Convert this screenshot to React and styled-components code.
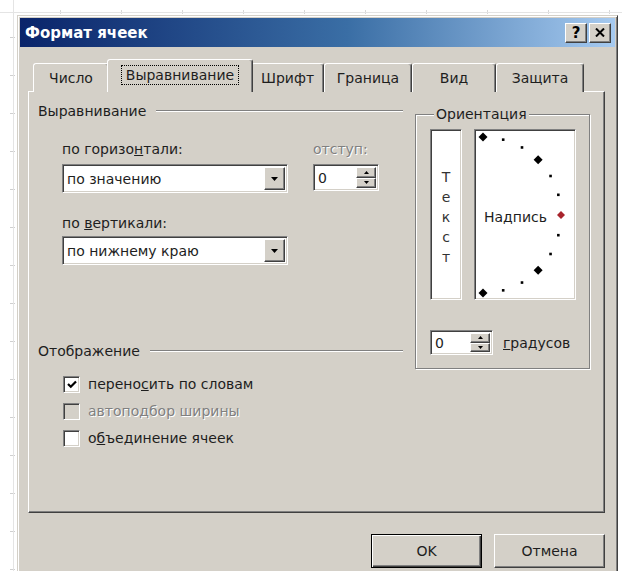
import React from 'react'
import styled, { createGlobalStyle, css } from 'styled-components'

const face = '#d4d0c8'
const shade = '#808080'
const dark = '#404040'

const GlobalStyles = createGlobalStyle`
  html, body {
    margin: 0;
    padding: 0;
  }
  body {
    width: 622px;
    height: 571px;
    overflow: hidden;
    background: #fff;
    font-family: "DejaVu Sans", "Liberation Sans", sans-serif;
    font-size: 14px;
    color: #1e1e1e;
  }
`

const raised = css`
  border-style: solid;
  border-width: 1px;
  border-color: #fff ${dark} ${dark} #fff;
  box-shadow: inset -1px -1px 0 ${shade}, inset 1px 1px 0 ${face};
`

const sunken = css`
  border-style: solid;
  border-width: 1px;
  border-color: ${shade} #fff #fff ${shade};
  box-shadow: inset 1px 1px 0 ${dark}, inset -1px -1px 0 ${face};
`

// spreadsheet grid peeking out behind the dialog
const Sheet = styled.div`
  width: 622px;
  height: 571px;
  overflow: hidden;
  box-sizing: border-box;
  padding: 15px 0 0 17px;
  background-color: #fff;
  background-image: linear-gradient(#e4e4e4, #e4e4e4),
    linear-gradient(#e4e4e4, #e4e4e4),
    repeating-linear-gradient(to bottom, transparent 0 37px, #cfcfcf 37px 38px),
    repeating-linear-gradient(to right, transparent 0 60px, #d8d8d8 60px 61px);
  background-size: 1px 100%, 100% 1px, 5px 100%, 100% 4px;
  background-position: 13px 0, 0 12px, 10px 0, 0 10px;
  background-repeat: no-repeat;
`

const Dialog = styled.div`
  width: 601px;
  height: 590px;
  flex: none;
  box-sizing: border-box;
  background: ${face};
  border: 1px solid;
  border-color: ${face} ${dark} ${dark} ${face};
  box-shadow: inset 1px 1px 0 #fff, inset -1px -1px 0 ${shade};
  padding: 2px;
  display: flex;
  flex-direction: column;
`

const TitleBar = styled.div`
  height: 29px;
  display: flex;
  align-items: center;
  padding: 0 4px 0 5px;
  background: linear-gradient(to right, #0a246a 0%, #3a6ea5 55%, #a6caf0 100%);
`

const Title = styled.div`
  flex: 1;
  color: #fff;
  font-weight: bold;
  font-size: 15px;
`

const CaptionButton = styled.div`
  width: 22px;
  height: 20px;
  box-sizing: border-box;
  ${raised};
  background: ${face};
  display: flex;
  align-items: center;
  justify-content: center;
  font-weight: bold;
  font-size: 15px;
  color: #000;
  margin-left: ${p => p.$gap || 0}px;
`

const Body = styled.div`
  padding: 12px 10px 0 8px;
  display: flex;
  flex-direction: column;
`

const TabRow = styled.div`
  display: flex;
  align-items: flex-end;
  padding-left: 5px;
  margin-bottom: -1px;
  position: relative;
  z-index: 1;
`

const Tab = styled.div`
  width: ${p => p.$w}px;
  height: ${p => (p.$active ? 33 : 29)}px;
  box-sizing: border-box;
  margin: 0 ${p => (p.$active ? -2 : 0)}px;
  background: ${face};
  border-style: solid;
  border-width: 1px 1px 0 1px;
  border-color: #fff ${dark} transparent #fff;
  box-shadow: inset -1px 0 0 ${shade};
  border-radius: 3px 3px 0 0;
  display: flex;
  align-items: center;
  justify-content: center;
  padding-bottom: ${p => (p.$active ? 2 : 0)}px;
  position: relative;
  z-index: ${p => (p.$active ? 2 : 1)};
`

const Focus = styled.span`
  outline: 1px dotted #000;
  outline-offset: 1px;
  padding: 0 3px;
`

const Panel = styled.div`
  height: 422px;
  box-sizing: border-box;
  ${raised};
  background: ${face};
  padding: 10px 0 0 9px;
  display: grid;
  grid-template-columns: 365px 175px;
  column-gap: 12px;
  align-items: start;
`

const Column = styled.div`
  display: flex;
  flex-direction: column;
`

const GroupHeader = styled.div`
  display: flex;
  align-items: center;
  height: 18px;
  margin-top: ${p => p.$top || 0}px;

  &::after {
    content: '';
    flex: 1;
    margin-left: 10px;
    border-top: 1px solid ${shade};
    border-bottom: 1px solid #fff;
  }
`

const Indent = styled.div`
  padding-left: 24px;
  display: flex;
  flex-direction: column;
`

const FieldRow = styled.div`
  display: flex;
  gap: 25px;
  margin-top: 20px;
`

const Field = styled.div`
  display: flex;
  flex-direction: column;
  margin-top: ${p => p.$top || 0}px;
`

const Label = styled.div`
  height: 18px;
  line-height: 18px;
  margin-bottom: ${p => p.$gap ?? 6}px;
  color: ${p => (p.$disabled ? shade : 'inherit')};
  text-shadow: ${p => (p.$disabled ? '1px 1px 0 #fff' : 'none')};
`

const Combo = styled.div`
  width: 226px;
  height: 29px;
  box-sizing: border-box;
  ${sunken};
  background: #fff;
  display: flex;
  padding: 2px;
`

const ComboText = styled.div`
  flex: 1;
  display: flex;
  align-items: center;
  padding-left: 2px;
`

const ArrowButton = styled.div`
  width: ${p => p.$w || 21}px;
  box-sizing: border-box;
  ${raised};
  background: ${face};
  display: flex;
  align-items: center;
  justify-content: center;
  flex: ${p => (p.$fill ? 1 : 'none')};
`

const Spinner = styled.div`
  width: ${p => p.$w}px;
  height: ${p => p.$h}px;
  box-sizing: border-box;
  ${sunken};
  background: #fff;
  display: flex;
  padding: 2px;
`

const SpinValue = styled.div`
  flex: 1;
  display: flex;
  align-items: center;
  padding-left: 2px;
`

const SpinButtons = styled.div`
  width: 20px;
  display: flex;
  flex-direction: column;
`

const Checks = styled.div`
  display: flex;
  flex-direction: column;
  gap: 7px;
  margin-top: 14px;
  padding-left: 25px;
`

const CheckRow = styled.div`
  display: flex;
  align-items: center;
  height: 20px;
  gap: 8px;
  color: ${p => (p.$disabled ? shade : 'inherit')};
  text-shadow: ${p => (p.$disabled ? '1px 1px 0 #fff' : 'none')};
`

const Box = styled.div`
  width: 17px;
  height: 17px;
  box-sizing: border-box;
  ${sunken};
  background: ${p => (p.$disabled ? face : '#fff')};
  display: flex;
  align-items: center;
  justify-content: center;
`

const Orientation = styled.fieldset`
  margin: 3px 0 0 0;
  padding: 6px 13px 13px 14px;
  border: 1px solid ${shade};
  box-shadow: inset 1px 1px 0 #fff, 1px 1px 0 #fff;
  min-width: 0;
  display: flex;
  flex-direction: column;
`

const Legend = styled.legend`
  padding: 0 2px;
  margin-left: 4px;
  background: ${face};
  line-height: 18px;
`

const Preview = styled.div`
  display: flex;
  gap: 12px;
`

const VerticalText = styled.div`
  width: 32px;
  height: 171px;
  box-sizing: border-box;
  ${sunken};
  background: #fff;
  display: flex;
  flex-direction: column;
  align-items: center;
  justify-content: center;
  padding-top: 4px;
  line-height: 20px;
  color: #333;
`

const DialBox = styled.div`
  width: 102px;
  height: 171px;
  box-sizing: border-box;
  ${sunken};
  background: #fff;
  position: relative;
  display: flex;
  align-items: center;
  padding: 4px 0 0 9px;
`

const DialDrawing = styled.svg`
  position: absolute;
  left: 0;
  top: 0;
`

const DialLabel = styled.span`
  position: relative;
`

const DegreeRow = styled.div`
  display: flex;
  align-items: center;
  gap: 10px;
  margin-top: 30px;
`

const Footer = styled.div`
  display: flex;
  justify-content: flex-end;
  gap: 12px;
  margin-top: 21px;
`

const PushButton = styled.div`
  width: 111px;
  height: 34px;
  box-sizing: border-box;
  background: ${face};
  display: flex;
  align-items: center;
  justify-content: center;
  ${p =>
    p.$default
      ? css`
          border: 1px solid #000;
          box-shadow: inset 1px 1px 0 #fff, inset -1px -1px 0 ${dark},
            inset -2px -2px 0 ${shade};
        `
      : css`
          ${raised};
        `}
`

const DownArrow = () => (
  <svg width="7" height="4" viewBox="0 0 7 4">
    <path d="M0 0h7L3.5 4z" fill="#000" />
  </svg>
)

const SmallArrow = ({ up }) => (
  <svg width="5" height="3" viewBox="0 0 5 3">
    <path d={up ? 'M2.5 0L5 3H0z' : 'M0 0h5L2.5 3z'} fill="#000" />
  </svg>
)

const Check = () => (
  <svg width="10" height="9" viewBox="0 0 10 9">
    <path d="M1 4l2.8 2.8L9 1.5" fill="none" stroke="#000" strokeWidth="2.2" />
  </svg>
)

const CloseGlyph = () => (
  <svg width="10" height="9" viewBox="0 0 10 9">
    <path d="M1 0.5l8 8M9 0.5l-8 8" stroke="#000" strokeWidth="2" />
  </svg>
)

function Dial() {
  // half circle of marks, one every 15 degrees
  const cx = 8
  const cy = 85
  const r = 78
  const marks = []
  for (let a = 90; a >= -90; a -= 15) {
    const rad = (a * Math.PI) / 180
    const x = cx + r * Math.cos(rad)
    const y = cy - r * Math.sin(rad)
    if (a === 0) {
      marks.push(<path key={a} d={`M${x} ${y - 4}l4 4-4 4-4-4z`} fill="#a8242c" />)
    } else if (a % 45 === 0) {
      marks.push(<path key={a} d={`M${x} ${y - 4.5}l4.5 4.5-4.5 4.5-4.5-4.5z`} fill="#000" />)
    } else {
      marks.push(<rect key={a} x={x - 1.3} y={y - 1.3} width="2.6" height="2.6" fill="#000" />)
    }
  }
  return (
    <DialDrawing width="100" height="169" viewBox="0 0 100 169">
      {marks}
    </DialDrawing>
  )
}

function Spin({ w, h, value }) {
  return (
    <Spinner $w={w} $h={h}>
      <SpinValue>{value}</SpinValue>
      <SpinButtons>
        <ArrowButton $fill $w={20}>
          <SmallArrow up />
        </ArrowButton>
        <ArrowButton $fill $w={20}>
          <SmallArrow />
        </ArrowButton>
      </SpinButtons>
    </Spinner>
  )
}

const tabs = [
  { name: 'Число', w: 76 },
  { name: 'Выравнивание', w: 146, active: true },
  { name: 'Шрифт', w: 73 },
  { name: 'Граница', w: 88 },
  { name: 'Вид', w: 84 },
  { name: 'Защита', w: 88 },
]

export default function App() {
  return (
    <Sheet>
      <GlobalStyles />
      <Dialog>
        <TitleBar>
          <Title>Формат ячеек</Title>
          <CaptionButton>?</CaptionButton>
          <CaptionButton $gap={2}>
            <CloseGlyph />
          </CaptionButton>
        </TitleBar>

        <Body>
          <TabRow>
            {tabs.map(t => (
              <Tab key={t.name} $w={t.w} $active={t.active}>
                {t.active ? <Focus>{t.name}</Focus> : t.name}
              </Tab>
            ))}
          </TabRow>

          <Panel>
            <Column>
              <GroupHeader>Выравнивание</GroupHeader>
              <Indent>
                <FieldRow>
                  <Field>
                    <Label>
                      по горизо<u>н</u>тали:
                    </Label>
                    <Combo>
                      <ComboText>по значению</ComboText>
                      <ArrowButton>
                        <DownArrow />
                      </ArrowButton>
                    </Combo>
                  </Field>
                  <Field>
                    <Label $disabled>отступ:</Label>
                    <Spin w={66} h={27} value="0" />
                  </Field>
                </FieldRow>
                <Field $top={21}>
                  <Label $gap={4}>
                    по <u>в</u>ертикали:
                  </Label>
                  <Combo>
                    <ComboText>по нижнему краю</ComboText>
                    <ArrowButton>
                      <DownArrow />
                    </ArrowButton>
                  </Combo>
                </Field>
              </Indent>

              <GroupHeader $top={77}>Отображение</GroupHeader>
              <Checks>
                <CheckRow>
                  <Box>
                    <Check />
                  </Box>
                  <span>
                    перено<u>с</u>ить по словам
                  </span>
                </CheckRow>
                <CheckRow $disabled>
                  <Box $disabled />
                  <span>автоподбор ширины</span>
                </CheckRow>
                <CheckRow>
                  <Box />
                  <span>
                    о<u>б</u>ъединение ячеек
                  </span>
                </CheckRow>
              </Checks>
            </Column>

            <Orientation>
              <Legend>Ориентация</Legend>
              <Preview>
                <VerticalText>
                  {'Текст'.split('').map((ch, i) => (
                    <span key={i}>{ch}</span>
                  ))}
                </VerticalText>
                <DialBox>
                  <Dial />
                  <DialLabel>Надпись</DialLabel>
                </DialBox>
              </Preview>
              <DegreeRow>
                <Spin w={63} h={25} value="0" />
                <span>
                  <u>г</u>радусов
                </span>
              </DegreeRow>
            </Orientation>
          </Panel>

          <Footer>
            <PushButton $default>OK</PushButton>
            <PushButton>Отмена</PushButton>
          </Footer>
        </Body>
      </Dialog>
    </Sheet>
  )
}
